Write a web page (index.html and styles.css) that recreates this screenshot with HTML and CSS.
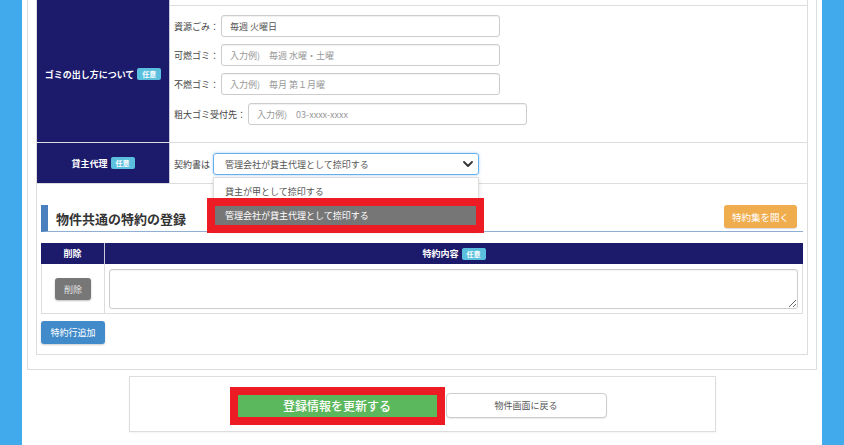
FILE: index.html
```html
<!DOCTYPE html>
<html lang="ja">
<head>
<meta charset="utf-8">
<title>物件情報の編集</title>
<link rel="stylesheet" href="styles.css">
</head>
<body>
<div class="page">
  <div class="outer">
    <div class="inner">
      <div class="form-rows">
        <div class="row row-stub">
          <div class="row-head"></div>
          <div class="row-body"></div>
        </div>
        <div class="row">
          <div class="row-head"><span class="head-label">ゴミの出し方について</span><span class="badge">任意</span></div>
          <div class="row-body">
            <div class="field-list">
              <div class="field"><label class="field-label">資源ごみ：</label><input class="text-input" type="text" value="毎週 火曜日"></div>
              <div class="field"><label class="field-label">可燃ゴミ：</label><input class="text-input" type="text" placeholder="入力例)　毎週 水曜・土曜"></div>
              <div class="field"><label class="field-label">不燃ゴミ：</label><input class="text-input" type="text" placeholder="入力例)　毎月 第１月曜"></div>
              <div class="field field-last"><label class="field-label">粗大ゴミ受付先：</label><input class="text-input" type="text" placeholder="入力例)　03-xxxx-xxxx"></div>
            </div>
          </div>
        </div>
        <div class="row">
          <div class="row-head"><span class="head-label">貸主代理</span><span class="badge">任意</span></div>
          <div class="row-body row-body-select">
            <div class="field">
              <label class="field-label">契約書は</label>
              <div class="select-wrap">
                <div class="select">
                  <span class="select-value">管理会社が貸主代理として捺印する</span>
                  <svg class="chevron" width="10" height="6" viewBox="0 0 10 6"><polyline points="1,1 5,5 9,1" fill="none" stroke="#333" stroke-width="1.8" stroke-linecap="round" stroke-linejoin="round"/></svg>
                </div>
                <ul class="dropdown">
                  <li class="option">貸主が甲として捺印する</li>
                  <li class="option option-active">管理会社が貸主代理として捺印する</li>
                </ul>
              </div>
            </div>
          </div>
        </div>
      </div>

      <div class="clauses">
        <div class="section-head">
          <h2 class="section-title">物件共通の特約の登録</h2>
          <button class="btn btn-orange" type="button">特約集を開く</button>
        </div>

        <div class="clause-grid">
          <div class="clause-th clause-th-first">削除</div>
          <div class="clause-th">特約内容<span class="badge">任意</span></div>
          <div class="clause-td clause-td-first"><button class="btn btn-gray" type="button">削除</button></div>
          <div class="clause-td"><textarea class="clause-text"></textarea></div>
        </div>

        <button class="btn btn-blue" type="button">特約行追加</button>
      </div>
    </div>
  </div>

  <div class="action-bar">
    <button class="btn btn-green" type="button">登録情報を更新する</button>
    <button class="btn btn-white" type="button">物件画面に戻る</button>
  </div>
</div>
</body>
</html>
```

FILE: styles.css
```css
* {
  box-sizing: border-box;
}

html,
body {
  margin: 0;
  height: 100%;
}

body {
  background: #40aaec;
  font-family: "Noto Sans CJK JP", "Noto Sans", sans-serif;
  font-size: 9px;
  color: #444;
  overflow: hidden;
}

.page {
  margin: 0 22px;
  min-height: 100%;
  background: #fff;
  padding: 0 5px;
}

.outer {
  border: 1px solid #ddd;
  border-top: 0;
  padding: 0 8px 14px;
}

.inner {
  border: 1px solid #ddd;
  border-top: 0;
  padding-bottom: 10px;
}

/* form rows: navy heading column + input column */
.row {
  display: grid;
  grid-template-columns: 133px 1fr;
  border-bottom: 1px solid #ddd;
}

.row-stub {
  height: 6px;
}

.row-head {
  background: #1b1a6b;
  border-right: 1px solid #c9c9dc;
  display: flex;
  align-items: center;
  justify-content: center;
  gap: 3px;
}

.head-label {
  color: #fff;
  font-weight: bold;
  font-size: 9px;
}

.badge {
  display: inline-block;
  background: #5bc0de;
  color: #fff;
  font-weight: bold;
  font-size: 7px;
  line-height: 10px;
  padding: 1px 5px;
  border-radius: 2px;
}

.row-body {
  padding: 9px 4px 17px;
}

.row-body-select {
  padding: 10px 4px 8px;
}

.field-list {
  display: flex;
  flex-direction: column;
  gap: 7px;
}

.field-last {
  margin-top: 1px;
}

.field {
  display: flex;
  align-items: center;
}

.field-label {
  margin-right: 2px;
  color: #444;
}

.text-input {
  width: 279px;
  height: 22px;
  border: 1px solid #ccc;
  border-radius: 3px;
  padding: 0 8px;
  font-family: inherit;
  font-size: 9px;
  color: #555;
  box-shadow: inset 0 1px 1px rgba(0, 0, 0, 0.06);
  outline: none;
}

.text-input::placeholder {
  color: #999;
}

/* custom select with its open list */
.select-wrap {
  position: relative;
  margin-left: 1px;
}

.select {
  width: 266px;
  height: 22px;
  border: 1px solid #66afe9;
  border-radius: 3px;
  box-shadow: 0 0 3px rgba(102, 175, 233, 0.6);
  display: flex;
  align-items: center;
  justify-content: space-between;
  padding: 0 5px 0 11px;
  color: #555;
}

.dropdown {
  position: absolute;
  z-index: 10;
  top: 24px;
  left: 0;
  width: 266px;
  margin: 0;
  padding: 4px 0 4px;
  list-style: none;
  background: #fff;
  border: 1px solid #ddd;
  box-shadow: 0 2px 4px rgba(0, 0, 0, 0.15);
}

.option {
  height: 19px;
  line-height: 19px;
  margin: 0 2px 0 1px;
  padding-left: 10px;
  color: #555;
}

.option + .option {
  margin-top: 5px;
}

.option-active {
  background: #767676;
  color: #fff;
  outline: 8px solid #ed1c24;
}

/* special clauses */
.clauses {
  padding: 0 4px;
}

.section-head {
  margin-top: 21px;
  height: 27px;
  border-left: 7px solid #4a80bd;
  border-bottom: 1px solid #8fb0d3;
  display: flex;
  align-items: center;
  justify-content: space-between;
  padding-left: 8px;
}

.section-title {
  margin: 0;
  font-size: 13px;
  font-weight: bold;
  color: #333;
}

.btn {
  font-family: inherit;
  border: 0;
  border-radius: 3px;
  cursor: pointer;
  padding: 0;
}

.btn-orange {
  align-self: flex-end;
  margin: 0 6px 3px 0;
  width: 73px;
  height: 23px;
  background: #f0ad4e;
  color: #fff;
  font-size: 9.5px;
  box-shadow: 0 1px 1px rgba(0, 0, 0, 0.15);
}

.clause-grid {
  margin-top: 11px;
  display: grid;
  grid-template-columns: 64px 1fr;
}

.clause-th {
  height: 21px;
  background: #1b1a6b;
  color: #fff;
  font-weight: bold;
  display: flex;
  align-items: center;
  justify-content: center;
  gap: 3px;
}

.clause-th-first {
  border-right: 1px solid #c9c9dc;
}

.clause-td {
  padding: 5px 4px 4px;
  border-right: 1px solid #ddd;
  border-bottom: 1px solid #ddd;
}

.clause-td-first {
  border-left: 1px solid #ddd;
  display: flex;
  align-items: center;
  justify-content: center;
}

.btn-gray {
  width: 36px;
  height: 22px;
  background: #777;
  color: #e4e4e4;
  font-size: 9px;
  box-shadow: 0 1px 2px rgba(0, 0, 0, 0.25);
}

.clause-text {
  display: block;
  width: 100%;
  height: 40px;
  border: 1px solid #ccc;
  border-radius: 3px;
  font-family: inherit;
  font-size: 9px;
  box-shadow: inset 0 1px 1px rgba(0, 0, 0, 0.06);
}

.btn-blue {
  display: block;
  margin-top: 7px;
  width: 64px;
  height: 23px;
  background: #428bca;
  color: #fff;
  font-size: 9px;
  box-shadow: 0 1px 2px rgba(0, 0, 0, 0.2);
}

/* bottom action bar */
.action-bar {
  width: 587px;
  margin: 6px auto 0;
  border: 1px solid #ddd;
  box-shadow: 0 1px 2px rgba(0, 0, 0, 0.05);
  padding: 16px 0 13px;
  display: flex;
  align-items: center;
  justify-content: center;
  gap: 9px;
}

.btn-green {
  width: 199px;
  height: 22px;
  border-radius: 0;
  background: #5cb85c;
  color: #fff;
  font-size: 12px;
  font-weight: 500;
  outline: 8px solid #ed1c24;
}

.btn-white {
  width: 161px;
  height: 25px;
  background: #fff;
  border: 1px solid #ccc;
  border-radius: 4px;
  color: #555;
  font-size: 9px;
  box-shadow: 0 1px 1px rgba(0, 0, 0, 0.08);
}
```
